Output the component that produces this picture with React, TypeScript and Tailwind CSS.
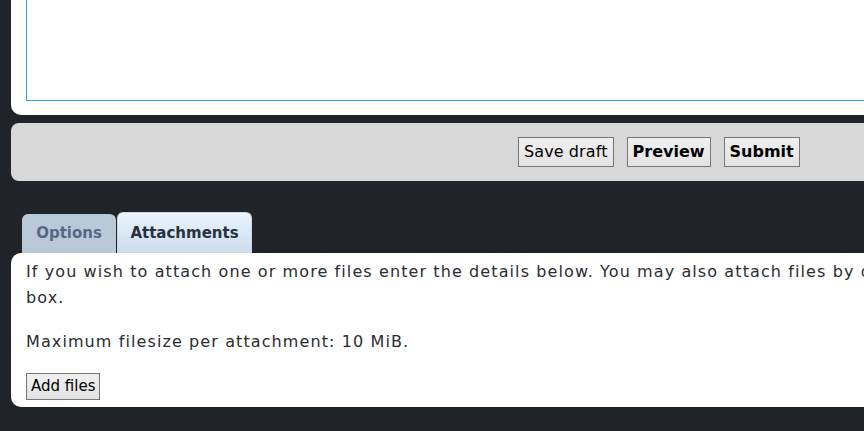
export default function App() {
  const btn =
    "border border-[#767676] bg-gradient-to-b from-[#f0f0f0] to-[#e3e3e3] text-black";
  return (
    <div className="w-[864px] h-[431px] overflow-hidden bg-[#202328] font-['DejaVu_Sans',Verdana,sans-serif]">
      <div className="w-[1320px] pl-[11px]">
        {/* editor panel */}
        <div className="h-[115px] bg-white rounded-bl-[10px] pl-[15px]">
          <div className="h-[101px] border border-t-0 border-[#2ea6e6]" />
        </div>

        {/* submit buttons */}
        <div className="mt-[8px] h-[58px] bg-[#d8d8d8] rounded-l-[8px] flex items-center pl-[507px] gap-[13px]">
          <button className={`${btn} h-[30px] px-[5px] text-[16px] tracking-[0.1px]`}>Save draft</button>
          <button className={`${btn} h-[30px] px-[5px] text-[16px] font-bold`}>Preview</button>
          <button className={`${btn} h-[30px] px-[5px] text-[16px] font-bold`}>Submit</button>
        </div>

        {/* tabs */}
        <div className="mt-[31px] pl-[11px] flex items-end gap-[1px]">
          <div className="h-[39px] w-[94px] rounded-t-[6px] bg-[#b9c9d7] flex items-center justify-center text-[15px] font-bold text-[#576785]">
            Options
          </div>
          <div className="h-[41px] w-[135px] rounded-t-[6px] border border-b-0 border-[#c5d8ea] bg-gradient-to-b from-[#eaf4fd] to-[#cbdced] flex items-center justify-center text-[15px] font-bold text-[#28313f]">
            Attachments
          </div>
        </div>

        {/* attachment panel */}
        <div className="h-[154px] bg-white rounded-[10px] px-[15px] pt-[6px] text-[16px] leading-[26px] tracking-[1.1px] text-[#2a2d33]">
          <p className="w-[1275px]">
            If you wish to attach one or more files enter the details below. You may also attach files by dragging and
            dropping them into the message box.
          </p>
          <p className="mt-[18px]">Maximum filesize per attachment: 10 MiB.</p>
          <button className={`${btn} mt-[18px] h-[27px] px-[4px] text-[15px] leading-none tracking-normal`}>
            Add files
          </button>
        </div>
      </div>
    </div>
  );
}
